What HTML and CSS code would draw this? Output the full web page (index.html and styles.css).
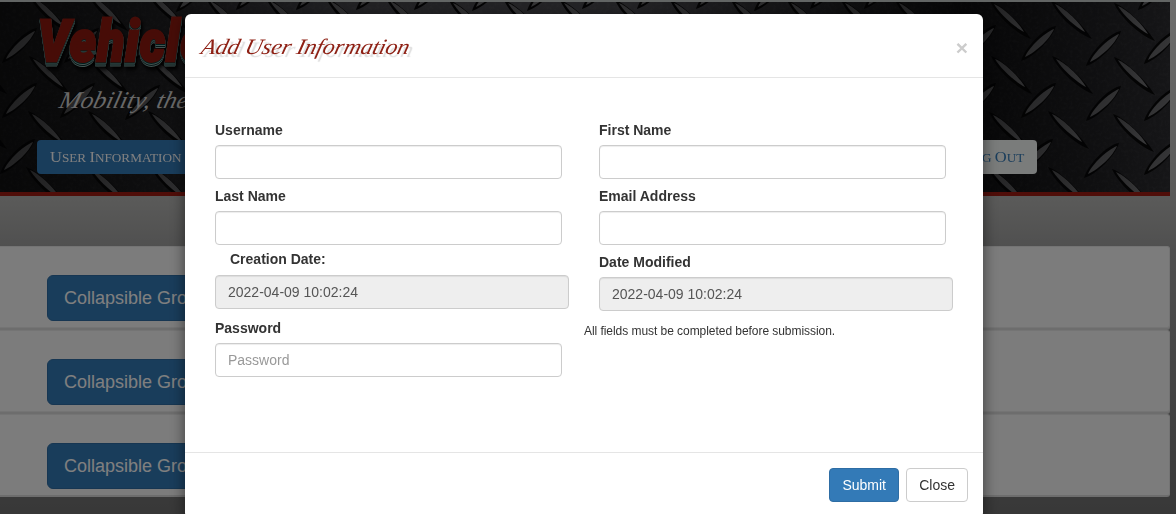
FILE: index.html
```html
<!DOCTYPE html>
<html lang="en">
<head>
<meta charset="utf-8">
<title>Add User Information</title>
<link rel="stylesheet" href="styles.css">
</head>
<body>
<div class="page">
  <header class="banner">
    <svg class="plate" width="1170" height="190" viewBox="0 2 1170 190" aria-hidden="true">
      <defs>
        <linearGradient id="metal" x1="0" y1="0" x2="1" y2="1"><stop offset="0" stop-color="#5c5c5f"/><stop offset="1" stop-color="#77777a"/></linearGradient>
        <linearGradient id="base" x1="0" y1="0" x2="1" y2="0"><stop offset="0" stop-color="#18181a"/><stop offset=".15" stop-color="#242427"/><stop offset=".3" stop-color="#47474c"/><stop offset=".55" stop-color="#47474c"/><stop offset=".82" stop-color="#131315"/><stop offset="1" stop-color="#2c2c30"/></linearGradient>
        <linearGradient id="shade" x1="0" y1="0" x2="1" y2="0"><stop offset="0" stop-color="#000" stop-opacity=".35"/><stop offset=".2" stop-color="#000" stop-opacity=".1"/><stop offset=".5" stop-color="#000" stop-opacity="0"/><stop offset=".82" stop-color="#000" stop-opacity=".3"/><stop offset="1" stop-color="#000" stop-opacity="0"/></linearGradient>
        <filter id="grain"><feTurbulence type="fractalNoise" baseFrequency=".3" numOctaves="3" seed="4"/><feColorMatrix values="0 0 0 0 .5  0 0 0 0 .5  0 0 0 0 .53  .9 0 0 0 -.4"/></filter>
        <g id="d"><path d="M-19-17C-9-14 10 3 22 21 6 15-13-3-19-17" fill="#080809"/><path d="M-15-14C-7-11 8 2 15 14 5 9-10-5-15-14" fill="url(#metal)"/></g>
        <g id="u"><path d="M-18 18C-15 6 4-15 17-17 13-4-5 14-18 18" fill="#080809"/><path d="M-14 14C-10 4 5-10 15-14 11-4-3 9-14 14" fill="url(#metal)"/></g>
      </defs>
      <rect y="2" width="1170" height="190" fill="url(#base)"/>
      <rect y="2" width="1170" height="190" filter="url(#grain)" opacity=".16"/>
      <use href="#d" x="-15" y="73"/><use href="#d" x="-15" y="128"/>
      <use href="#d" x="48" y="12"/><use href="#d" x="106" y="10"/><use href="#d" x="165" y="8"/>
      <use href="#d" x="48" y="73"/><use href="#d" x="107" y="73"/><use href="#d" x="167" y="73"/>
      <use href="#d" x="47" y="128"/><use href="#d" x="107" y="128"/><use href="#d" x="167" y="128"/>
      <use href="#d" x="45" y="184"/><use href="#d" x="107" y="184"/><use href="#d" x="170" y="184"/>
      <use href="#u" x="20" y="45"/><use href="#u" x="82" y="45"/><use href="#u" x="143" y="47"/>
      <use href="#u" x="20" y="100"/><use href="#u" x="78" y="100"/><use href="#u" x="143" y="102"/>
      <use href="#u" x="18" y="156"/>
      <use href="#d" x="225" y="15"/><use href="#d" x="285" y="15"/><use href="#d" x="345" y="15"/><use href="#d" x="405" y="15"/><use href="#d" x="468" y="17"/><use href="#d" x="523" y="17"/><use href="#d" x="579" y="17"/><use href="#d" x="634" y="17"/><use href="#d" x="689" y="17"/><use href="#d" x="750" y="17"/><use href="#d" x="806" y="17"/><use href="#d" x="860" y="17"/><use href="#d" x="914" y="17"/>
      <use href="#u" x="194" y="-6"/><use href="#u" x="254" y="-8"/><use href="#u" x="314" y="-8"/><use href="#u" x="374" y="-8"/><use href="#u" x="432" y="-8"/><use href="#u" x="490" y="-7"/><use href="#u" x="545" y="-7"/><use href="#u" x="600" y="-9"/><use href="#u" x="655" y="-9"/><use href="#u" x="714" y="-9"/><use href="#u" x="772" y="-7"/><use href="#u" x="828" y="-9"/><use href="#u" x="882" y="-9"/><use href="#u" x="1156" y="-8"/>
      <use href="#d" x="1009" y="18"/><use href="#d" x="1070" y="18"/><use href="#d" x="1133" y="20"/>
      <use href="#d" x="1010" y="73"/><use href="#d" x="1071" y="73"/><use href="#d" x="1133" y="74"/>
      <use href="#d" x="1008" y="129"/><use href="#d" x="1067" y="128"/><use href="#d" x="1132" y="131"/>
      <use href="#d" x="1006" y="184"/><use href="#d" x="1067" y="184"/><use href="#d" x="1131" y="186"/>
      <use href="#u" x="979" y="42"/><use href="#u" x="1039" y="43"/><use href="#u" x="1104" y="48"/><use href="#u" x="1162" y="46"/>
      <use href="#u" x="979" y="100"/><use href="#u" x="1039" y="100"/><use href="#u" x="1104" y="103"/><use href="#u" x="1162" y="103"/>
      <use href="#u" x="1036" y="156"/><use href="#u" x="1102" y="160"/><use href="#u" x="1162" y="157"/>
      <rect y="2" width="1170" height="190" fill="url(#shade)"/>
    </svg>
    <div class="banner-content">
      <div class="brand">Vehicle</div>
      <div class="tagline"><span>Mobility, the</span></div>
      <nav class="nav"><a class="tab active"><span><b>U</b>ser <b>I</b>nformation</span></a><a class="tab logout"><span><b>L</b>og <b>O</b>ut</span></a></nav>
    </div>
  </header>
  <main class="groups">
    <section class="panel"><button class="group-btn">Collapsible Group</button></section>
    <section class="panel"><button class="group-btn">Collapsible Group</button></section>
    <section class="panel"><button class="group-btn">Collapsible Group</button></section>
  </main>
</div>
<div class="backdrop">
  <form class="modal">
    <div class="modal-header"><h4 class="modal-title">Add User Information</h4><button type="button" class="dismiss" aria-label="Close">×</button></div>
    <div class="modal-body">
      <div class="column">
        <div class="field"><label>Username</label><input class="control"></div>
        <div class="field tight"><label>Last Name</label><input class="control"></div>
        <div class="field created"><label>Creation Date:</label><input class="control readonly" value="2022-04-09 10:02:24" readonly></div>
        <div class="field"><label>Password</label><input class="control" placeholder="Password"></div>
      </div>
      <div class="column">
        <div class="field"><label>First Name</label><input class="control"></div>
        <div class="field"><label>Email Address</label><input class="control"></div>
        <div class="field"><label>Date Modified</label><input class="control readonly" value="2022-04-09 10:02:24" readonly></div>
        <p class="note">All fields must be completed before submission.</p>
      </div>
    </div>
    <div class="modal-footer"><button type="button" class="btn primary">Submit</button><button type="button" class="btn">Close</button></div>
  </form>
</div>
</body>
</html>
```
FILE: styles.css
```css
* { box-sizing: border-box; }
html, body { height: 100%; margin: 0; overflow: hidden; }
body { font: 14px/20px "Liberation Sans", Arial, sans-serif; color: #333; }
button, input { font: inherit; }
.page { height: 514px; padding-right: 6px; background: linear-gradient(#dcdcda 0, #b4b4b2 200px, #9f9f9f 250px, #707070 514px); }
.banner { position: relative; height: 196px; border-top: 2px solid #c4cac8; border-bottom: 4px solid #a01c12; overflow: hidden; }
.plate { display: block; }
.banner-content { position: absolute; inset: 0; padding: 7px 0 0 38px; }
.brand { width: max-content; height: 64px; font: italic 900 57px/66px Roboto, sans-serif; letter-spacing: 1.5px; color: #8e190f; -webkit-text-stroke: 3px #8e190f; filter: drop-shadow(0 1px #003c3c) drop-shadow(0 1px #88a8a4) drop-shadow(0 1px #062828) drop-shadow(0 1px #88a8a4) drop-shadow(2px 3px 2px #000); transform: scaleX(.865); transform-origin: left; }
.tagline { height: 67px; padding: 11px 0 0 22px; font: italic 24px/32px "Liberation Serif", serif; color: #d0d0d0; white-space: nowrap; }
.tagline span { display: inline-block; transform: skewX(-14deg) scaleX(1.06); transform-origin: left; }
.nav { display: flex; justify-content: space-between; width: 999px; }
.tab { display: flex; align-items: center; height: 34px; padding: 0 13px; border-radius: 4px; background: #f4f8f6; color: #337ab7; font: 12px/32px "Liberation Serif", serif; text-transform: uppercase; }
.tab b { font-size: 15px; font-weight: normal; }
.tab.active { margin-left: -1px; background: #337ab7; color: #fff; width: 180px; white-space: nowrap; }
.tab span { transform: scaleX(1.1); transform-origin: left; }
.tab.logout span { transform-origin: right; }
.groups { display: flex; flex-direction: column; gap: 2px; padding-top: 50px; }
.panel { height: 82px; padding: 28px 46px 0 47px; border: 1px solid #e8e8e8; border-left: 0; border-radius: 0 3px 3px 0; background: #f8f8f8; box-shadow: 0 2px #dadada; }
.panel:last-child { box-shadow: none; height: 83px; border-bottom: 2px solid #dadada; }
.group-btn { height: 46px; padding: 0 16px; border: 1px solid #2e6da4; border-radius: 6px; background: #337ab7; color: #fff; font-size: 18px; }
.backdrop { position: fixed; inset: 0; display: flex; justify-content: center; align-items: flex-start; padding: 14px 8px 0 0; background: rgba(0,0,0,.5); }
.modal { width: 798px; flex: none; height: 505px; border-radius: 6px; background: #fff; box-shadow: 0 5px 15px rgba(0,0,0,.5); }
.modal-header { display: flex; justify-content: space-between; height: 64px; padding: 15px; border-bottom: 1px solid #e5e5e5; }
.modal-title { margin: 0; font: italic 22px/35px "Liberation Serif", serif; letter-spacing: -.1px; color: #8e2014; text-shadow: 4px 3px 1px #ddd; transform: skewX(-14deg) scaleX(1.08); transform-origin: left; padding-left: 2px; }
.dismiss { height: 37px; padding: 0; border: 0; background: none; font-size: 21px; font-weight: bold; color: #ccc; }
.modal-body { display: flex; height: 374px; padding: 42px 15px 0; }
.column { width: 384px; padding: 0 15px; }
.field { margin-bottom: 7px; }
.field.tight { margin-bottom: 4px; }
.field label { display: block; margin-bottom: 5px; font-weight: bold; }
.field.created { margin-bottom: 9px; }
.field.created label { margin-bottom: 6px; padding-left: 15px; }
.control { display: block; width: 347px; height: 34px; padding: 6px 12px; border: 1px solid #ccc; border-radius: 4px; background: #fff; color: #555; box-shadow: inset 0 1px 1px rgba(0,0,0,.075); }
.control::placeholder { color: #999; opacity: 1; }
.readonly { width: 354px; background: #eee; }
.note { margin: 10px 0 0 -15px; font-size: 12px; letter-spacing: -.05px; }
.modal-footer { display: flex; justify-content: flex-end; gap: 7px; padding: 15px; border-top: 1px solid #e5e5e5; }
.btn { height: 34px; padding: 0 12px; border: 1px solid #ccc; border-radius: 4px; background: #fff; color: #333; }
.btn.primary { width: 70px; border-color: #2e6da4; background: #337ab7; color: #fff; }
```
